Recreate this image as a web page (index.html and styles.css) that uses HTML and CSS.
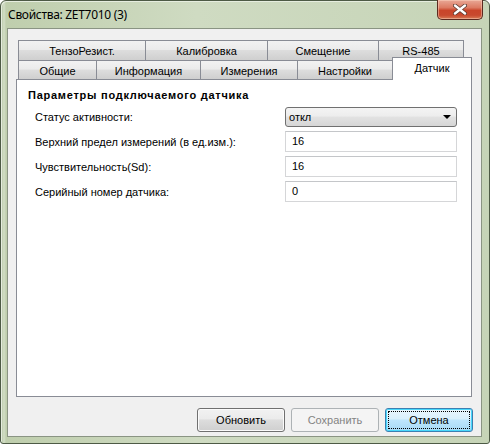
FILE: index.html
```html
<!DOCTYPE html>
<html lang="ru">
<head>
<meta charset="utf-8">
<title>Свойства: ZET7010 (3)</title>
<link rel="stylesheet" href="styles.css">
</head>
<body>
<div class="window">
  <div class="titlebar">
    <span class="title">Свойства: ZET7010 (3)</span>
    <button class="close" aria-label="Закрыть">
      <svg width="14" height="11" viewBox="0 0 14 11">
        <path d="M2 1.5 L12 9.5 M12 1.5 L2 9.5" stroke="#5a3a30" stroke-width="4" stroke-linecap="round"/>
        <path d="M2 1.5 L12 9.5 M12 1.5 L2 9.5" stroke="#ffffff" stroke-width="2.4" stroke-linecap="round"/>
      </svg>
    </button>
  </div>
  <div class="client">
    <div class="tabs">
      <div class="tabrow row1">
        <div class="tab t-tenzo">ТензоРезист.</div>
        <div class="tab t-kalib">Калибровка</div>
        <div class="tab t-smesh">Смещение</div>
        <div class="tab t-rs">RS-485</div>
      </div>
      <div class="tabrow row2">
        <div class="tab t-obsh">Общие</div>
        <div class="tab t-info">Информация</div>
        <div class="tab t-izm">Измерения</div>
        <div class="tab t-nastr">Настройки</div>
        <div class="tab active t-dat">Датчик</div>
      </div>
    </div>
    <div class="panel">
      <div class="heading">Параметры подключаемого датчика</div>
      <div class="form">
        <div class="label">Статус активности:</div>
        <div class="combo"><span>откл</span><span class="arrow"></span></div>
        <div class="label">Верхний предел измерений (в ед.изм.):</div>
        <div class="input">16</div>
        <div class="label">Чувствительность(Sd):</div>
        <div class="input">16</div>
        <div class="label">Серийный номер датчика:</div>
        <div class="input">0</div>
      </div>
    </div>
    <div class="buttons">
      <button class="btn">Обновить</button>
      <button class="btn disabled">Сохранить</button>
      <button class="btn default"><span class="focus">Отмена</span></button>
    </div>
  </div>
</div>
</body>
</html>
```

FILE: styles.css
```css
* { box-sizing: border-box; }
html, body { margin: 0; padding: 0; }
body {
  width: 490px;
  height: 444px;
  overflow: hidden;
  background: #ffffff;
  font-family: "Liberation Sans", Arial, sans-serif;
  font-size: 11px;
  color: #000;
}
.window {
  width: 490px;
  height: 444px;
  border: 1px solid #4d5a45;
  border-radius: 6px 6px 3px 3px;
  background: linear-gradient(to right, #b3c4a1 0px, #d3dec7 3px, #bfcead 5px, #cfdbc2 40%, #c6d4b7 100%);
  display: flex;
  flex-direction: column;
  padding: 0 7px 6px 6px;
  box-shadow: inset 1px 1px 0 #e6eddf;
}
.titlebar {
  height: 27px;
  display: flex;
  align-items: flex-start;
  flex-shrink: 0;
}
.title {
  font-family: "Noto Sans", "Open Sans", sans-serif;
  font-size: 12px;
  margin-top: 5px;
  margin-left: 1px;
  letter-spacing: -0.3px;
  color: #000;
}
.close {
  margin-left: auto;
  margin-right: -1px;
  margin-top: -1px;
  width: 46px;
  height: 20px;
  padding: 0;
  border: 1px solid #5b2a20;
  border-top: none;
  border-radius: 0 0 5px 5px;
  background: linear-gradient(#e9a896 0%, #dc7b63 40%, #c9452a 55%, #c8492e 80%, #d77b55 100%);
  box-shadow: inset 0 0 0 1px rgba(255, 220, 200, 0.45);
  display: flex;
  align-items: center;
  justify-content: center;
}
.client {
  flex: 1;
  background: #f0f0f0;
  border: 1px solid #8a9483;
  padding: 11px 8px 0 8px;
  display: flex;
  flex-direction: column;
}
.tabs {
  display: flex;
  flex-direction: column;
}
.tabrow {
  display: flex;
  padding-left: 2px;
}
.row1 { height: 20px; }
.row2 { height: 19px; align-items: flex-end; }
.tab {
  border: 1px solid #898c95;
  border-bottom: none;
  background: linear-gradient(#f2f2f2 0%, #ebebeb 45%, #dddddd 50%, #cfcfcf 100%);
  text-align: center;
  margin-left: -1px;
  white-space: nowrap;
}
.tab:first-child { margin-left: 0; }
.row1 .tab { height: 20px; line-height: 21px; }
.row2 .tab { height: 19px; line-height: 20px; }
.row2 .tab.active {
  height: 23px;
  margin-bottom: -1px;
  background: #ffffff;
  line-height: 20px;
  position: relative;
}
.t-tenzo { width: 128px; }
.t-kalib { width: 123px; }
.t-smesh { width: 112px; }
.t-rs { width: 86px; }
.t-obsh { width: 79px; }
.t-info { width: 105px; }
.t-izm { width: 98px; }
.t-nastr { width: 96px; }
.t-dat { width: 80px; }
.panel {
  width: 456px;
  height: 318px;
  background: #ffffff;
  border: 1px solid #898c95;
  padding: 8px 0 0 11px;
}
.heading {
  font-weight: bold;
  line-height: 14px;
  height: 14px;
  letter-spacing: 0.75px;
}
.form {
  margin-top: 5px;
  padding-left: 7px;
  display: grid;
  grid-template-columns: 250px 172px;
  grid-template-rows: 20px 21px 21px 21px;
  row-gap: 4px;
  align-items: center;
}
.label { line-height: 14px; }
.combo {
  height: 20px;
  border: 1px solid #707070;
  border-radius: 3px;
  background: linear-gradient(#f4f4f4 0%, #ededed 45%, #e2e2e2 50%, #d6d6d6 100%);
  display: flex;
  align-items: center;
  justify-content: space-between;
  padding: 0 5px 0 3px;
}
.arrow {
  width: 0;
  height: 0;
  border-left: 4px solid transparent;
  border-right: 4px solid transparent;
  border-top: 4px solid #000;
}
.input {
  height: 21px;
  border: 1px solid #d5d6d8;
  border-top-color: #c4c6c9;
  background: #fff;
  padding-left: 6px;
  line-height: 19px;
}
.buttons {
  display: flex;
  justify-content: flex-end;
  gap: 6px;
  margin-top: 11px;
}
.btn {
  width: 88px;
  height: 24px;
  border: 1px solid #707070;
  border-radius: 3px;
  background: linear-gradient(#f2f2f2 0%, #ebebeb 45%, #dddddd 50%, #cfcfcf 100%);
  box-shadow: inset 0 0 0 1px #fbfbfb;
  font-family: "Liberation Sans", Arial, sans-serif;
  font-size: 11px;
  color: #000;
  padding: 0;
}
.btn.disabled {
  border-color: #adb2b5;
  background: #f4f4f4;
  box-shadow: none;
  color: #838383;
}
.btn.default {
  border-color: #3c7fb1;
  background: linear-gradient(#eaf6fd 0%, #d9f0fc 45%, #bee6fd 50%, #a7d9f5 100%);
  box-shadow: inset 0 0 0 1px #48d8fb;
  padding: 2px;
}
.focus {
  display: flex;
  align-items: center;
  justify-content: center;
  height: 100%;
  border: 1px dotted #000;
}
```
